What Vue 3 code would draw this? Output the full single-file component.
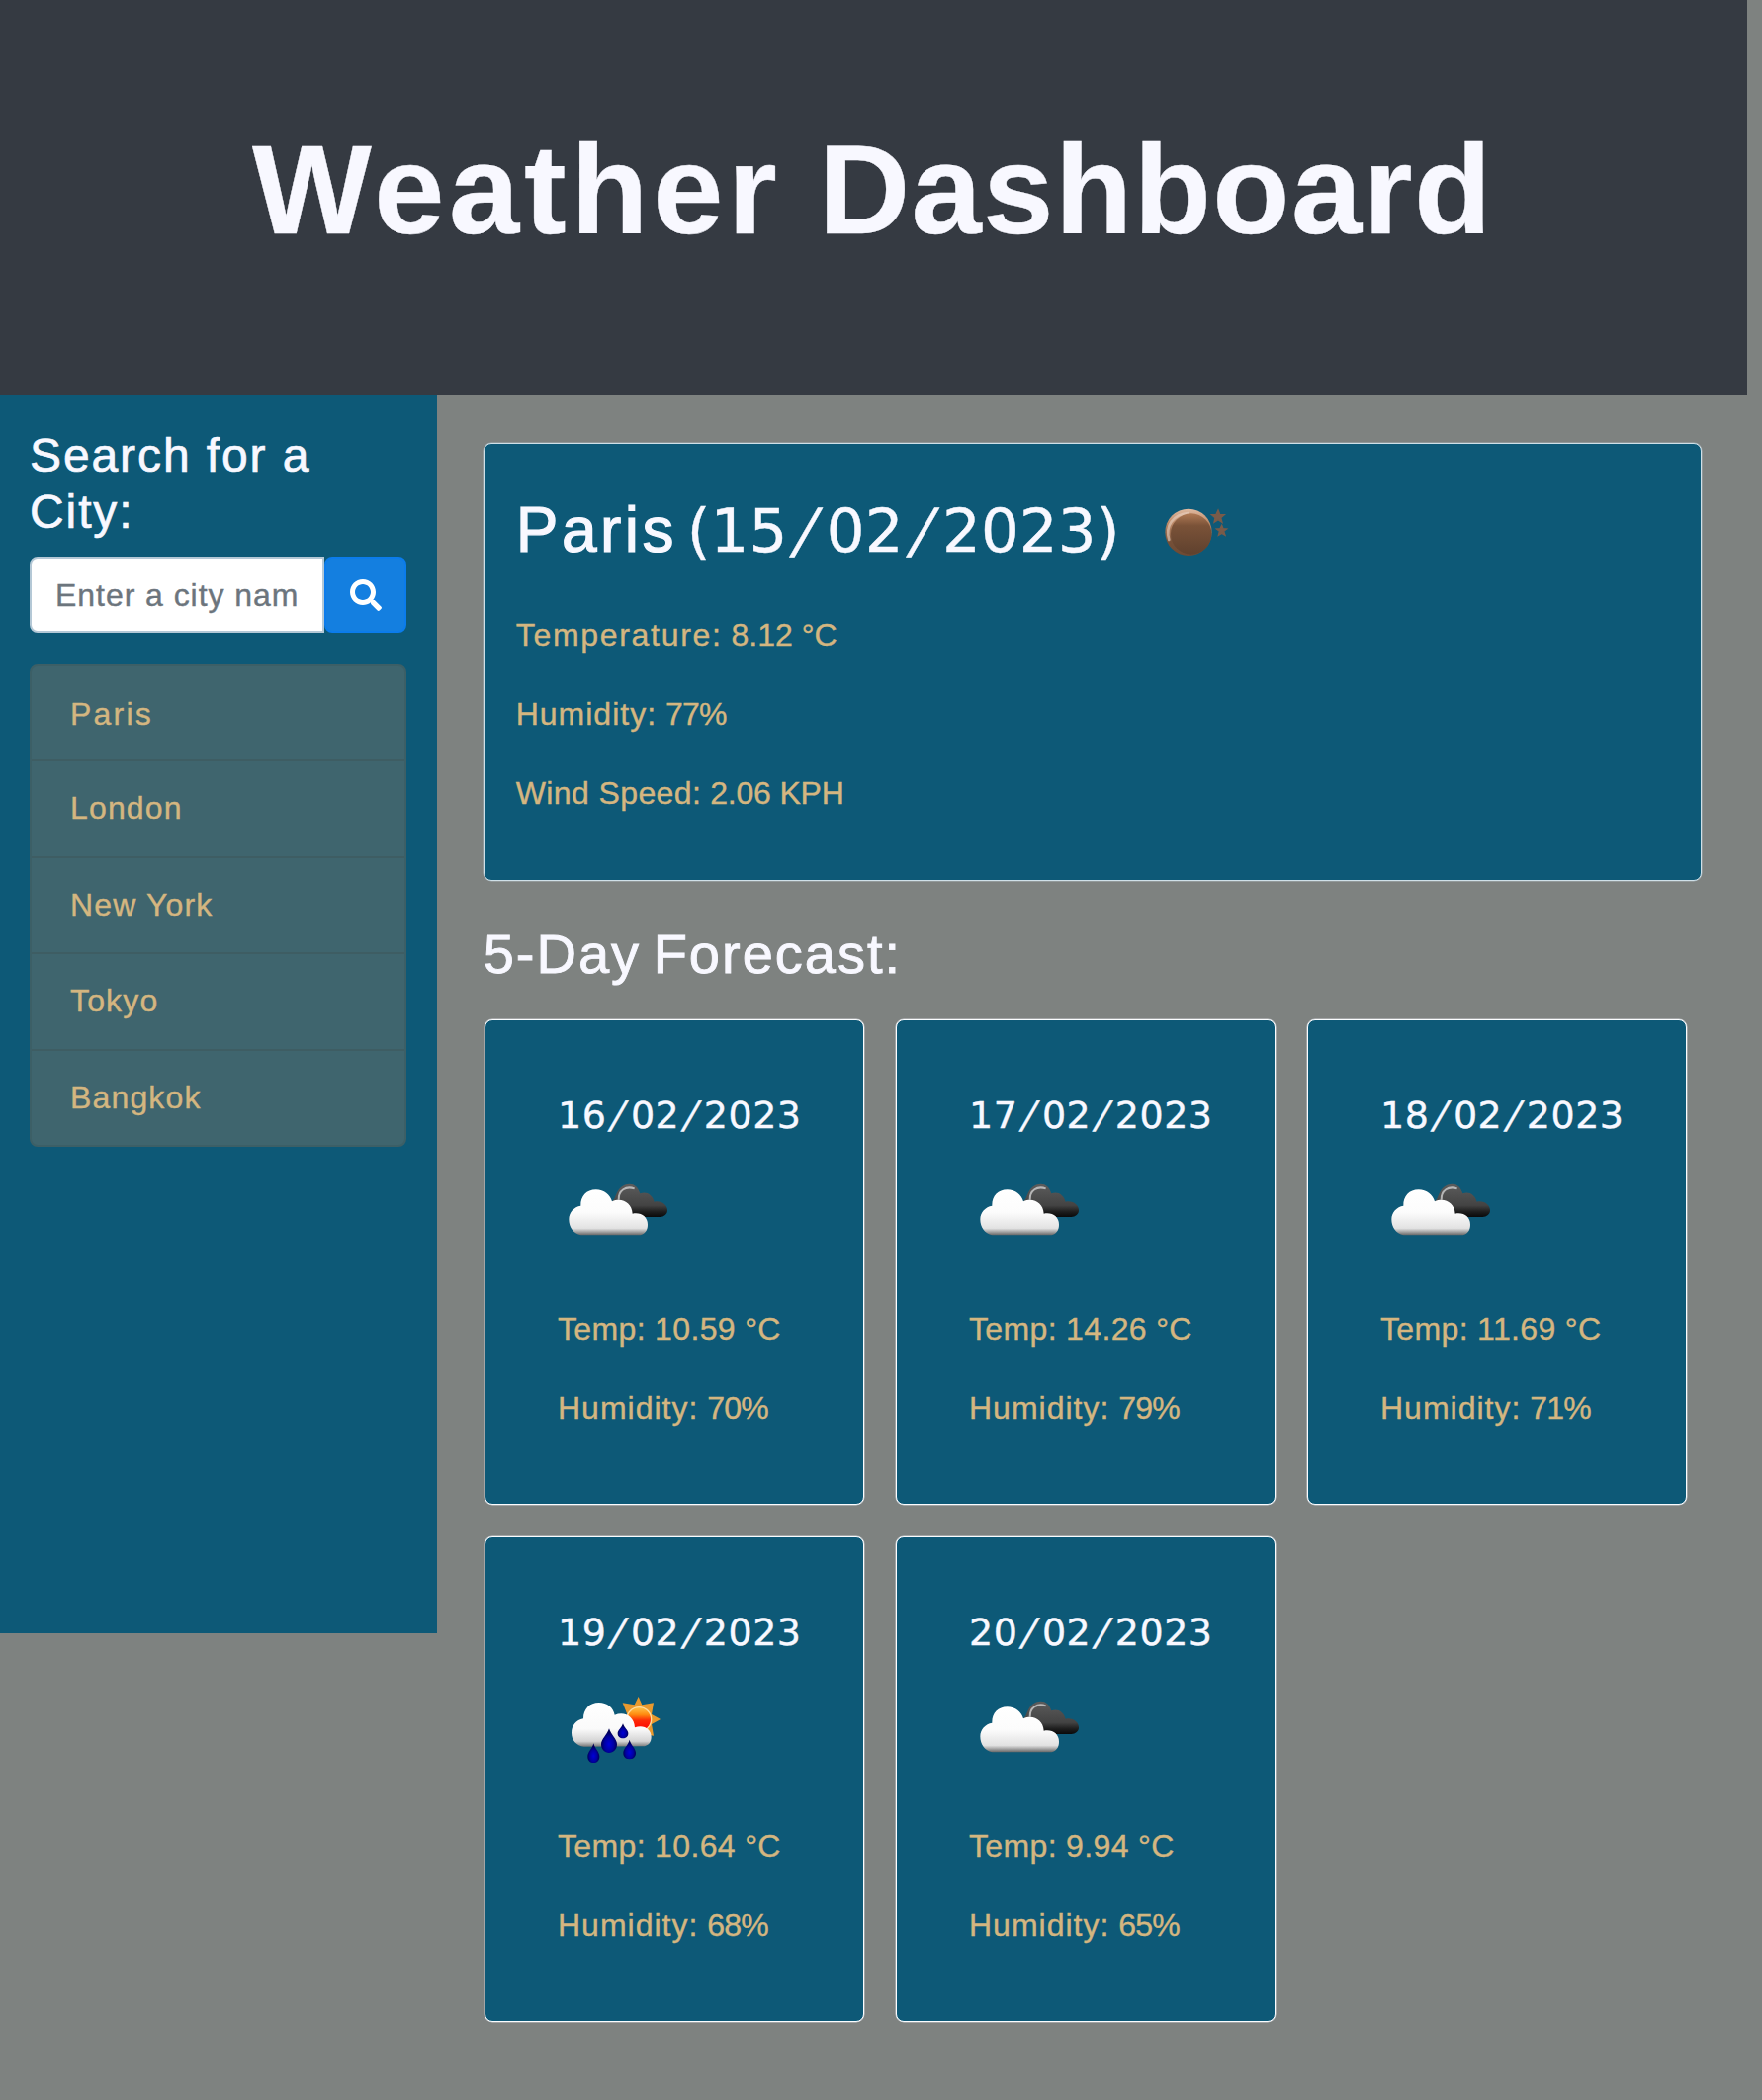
<script setup>
const cities = ['Paris', 'London', 'New York', 'Tokyo', 'Bangkok']
const today = ['15', '02', '2023']
const forecast = [
  { date: ['16', '02', '2023'], icon: 'clouds', temp: '10.59', humidity: 70 },
  { date: ['17', '02', '2023'], icon: 'clouds', temp: '14.26', humidity: 79 },
  { date: ['18', '02', '2023'], icon: 'clouds', temp: '11.69', humidity: 71 },
  { date: ['19', '02', '2023'], icon: 'rain', temp: '10.64', humidity: 68 },
  { date: ['20', '02', '2023'], icon: 'clouds', temp: '9.94', humidity: 65 }
]
</script>

<template>
  <div class="page">
    <header class="hero"><h1><span class="first">Weather</span> <span>Dashboard</span></h1></header>
    <div class="columns">
      <aside class="sidebar">
        <h3>Search for a City:</h3>
        <form class="search" @submit.prevent>
          <div class="field">Enter a city nam</div>
          <button type="submit" aria-label="Search">
            <svg viewBox="0 0 512 512" width="32" height="32">
              <path fill="#fff" d="M505 442.700L405.300 343c-4.500-4.500-10.600-7-17-7H372c27.600-35.300 44-79.700 44-128C416 93.100 322.900 0 208 0S0 93.100 0 208s93.100 208 208 208c48.300 0 92.700-16.400 128-44v16.300c0 6.400 2.500 12.500 7 17l99.700 99.700c9.400 9.400 24.600 9.400 33.900 0l28.300-28.300c9.400-9.400 9.400-24.600.1-34zM208 336c-70.700 0-128-57.200-128-128 0-70.700 57.200-128 128-128 70.700 0 128 57.200 128 128 0 70.700-57.200 128-128 128z" />
            </svg>
          </button>
        </form>
        <ul class="history">
          <li v-for="city in cities" :key="city">{{ city }}</li>
        </ul>
      </aside>

      <main class="content">
        <section class="current">
          <h2>
            <span class="city">Paris</span>
            <span class="day date">({{ today[0] }}<i>/</i>{{ today[1] }}<i>/</i>{{ today[2] }})</span>
            <svg class="moon" viewBox="90 30 300 270" width="100" height="90">
              <defs>
                <linearGradient id="moonBase" x1="0" y1="0" x2="0" y2="1">
                  <stop offset="0" stop-color="#e0bba2" />
                  <stop offset=".3" stop-color="#bd8a68" />
                  <stop offset=".7" stop-color="#755038" />
                  <stop offset="1" stop-color="#6d4a34" />
                </linearGradient>
                <linearGradient id="moonFace" x1="0" y1="0" x2="0" y2="1">
                  <stop offset="0" stop-color="#b07a55" />
                  <stop offset=".3" stop-color="#7a5238" />
                  <stop offset="1" stop-color="#5f412e" />
                </linearGradient>
              </defs>
              <circle cx="219" cy="169" r="71" fill="url(#moonBase)" />
              <path d="M160 192C147 148 174 115 217 111" fill="none" stroke="#e9d2c3" stroke-width="8" stroke-linecap="round" opacity=".6" />
              <circle cx="227" cy="174" r="62" fill="url(#moonFace)" />
              <path d="M309 102l5 13 14 1-11 9 4 14-12-8-12 8 3-14-11-9 14-1zM320 148l4 10 11 1-9 7 4 12-10-6-10 6 3-12-9-7 11-1z" fill="#795b49" stroke="#795b49" stroke-width="4" />
            </svg>
          </h2>
          <p><span class="l-temp">Temperature:</span> <span class="v-temp">8.12 °C</span></p>
          <p><span class="l-hum">Humidity:</span> <span class="v-hum">77%</span></p>
          <p><span class="l-wind">Wind Speed:</span> <span class="v-wind">2.06 KPH</span></p>
        </section>

        <h3 class="title">5-Day Forecast:</h3>
        <section class="forecast">
          <article v-for="day in forecast" :key="day.date[0]" class="card">
            <h5 class="date">{{ day.date[0] }}<i>/</i>{{ day.date[1] }}<i>/</i>{{ day.date[2] }}</h5>
            <svg v-if="day.icon === 'clouds'" class="icon" viewBox="12 -18 360 300" width="120" height="100">
              <defs>
                <linearGradient id="dark" x1="0" y1="0" x2="0" y2="1">
                  <stop offset="0" stop-color="#5c5c5c" />
                  <stop offset=".65" stop-color="#434343" />
                  <stop offset=".85" stop-color="#1c1c1c" />
                  <stop offset="1" stop-color="#0a0a0a" />
                </linearGradient>
                <linearGradient id="light" x1="0" y1="0" x2="0" y2="1">
                  <stop offset="0" stop-color="#fff" />
                  <stop offset=".5" stop-color="#fcfcfc" />
                  <stop offset=".85" stop-color="#e2e2e2" />
                  <stop offset=".92" stop-color="#aaa" />
                  <stop offset="1" stop-color="#666" />
                </linearGradient>
              </defs>
              <path d="M178 104C190 100 188 55 230 53C246 53 256 63 262 82C280 74 299 84 305 107C326 102 345 116 345 133C345 145 335 153 322 153H230L180 120Z" fill="url(#dark)" />
              <path d="M197 101C196 72 219 58 245 67" fill="none" stroke="#c8c8c8" stroke-width="6" opacity=".85" />
              <path d="M82 208C60 204 46 184 46 160C46 139 62 122 82 119C81 90 100 70 128 70C153 70 171 85 177 106C207 93 237 110 239 143C265 138 285 152 285 176C285 194 276 204 263 208Z" fill="url(#light)" />
            </svg>
            <svg v-else class="icon" viewBox="12 -9 360 300" width="120" height="100">
              <defs>
                <linearGradient id="sun" x1="0" y1="0" x2="0" y2="1">
                  <stop offset="0" stop-color="#ffc247" />
                  <stop offset=".3" stop-color="#ff8b10" />
                  <stop offset=".55" stop-color="#fc2a08" />
                  <stop offset="1" stop-color="#f00" />
                </linearGradient>
                <linearGradient id="rainCloud" x1="0" y1="0" x2="0" y2="1">
                  <stop offset="0" stop-color="#fff" />
                  <stop offset=".6" stop-color="#fafafa" />
                  <stop offset=".88" stop-color="#d4d4d4" />
                  <stop offset="1" stop-color="#777" />
                </linearGradient>
                <radialGradient id="drop" cx=".5" cy=".65" r=".5">
                  <stop offset="0" stop-color="#0000d8" />
                  <stop offset=".6" stop-color="#0000a0" />
                  <stop offset="1" stop-color="#000055" />
                </radialGradient>
              </defs>
              <path d="M257 48l11 25 35-6-6 35 27 15-27 15 6 35-35-6-10 9-47-50 12-18-14-35 36 6z" fill="#e9992e" />
              <circle cx="259" cy="117" r="39" fill="#ffdca0" />
              <circle cx="259" cy="117" r="35" fill="url(#sun)" />
              <path d="M92 200C69 197 54 180 54 158C54 136 68 119 90 115C90 86 109 66 137 66C162 66 181 81 185 104C215 92 244 108 246 142C273 132 296 147 296 170C296 188 286 198 270 199Z" fill="url(#rainCloud)" />
              <g fill="url(#drop)">
                <path d="M168 145C174 164 192 177 192 193C192 209 181 219 168 219S144 209 144 193C144 177 162 164 168 145Z" />
                <path d="M210 130C214 143 226 150 226 160C226 170 219 175 210 175S194 170 194 160C194 150 206 143 210 130Z" />
                <path d="M121 190C125 206 139 217 139 230C139 242 131 249 121 249S103 242 103 230C103 217 117 206 121 190Z" />
                <path d="M230 179C234 195 249 206 249 219C249 231 241 238 230 238S211 231 211 219C211 206 226 195 230 179Z" />
              </g>
            </svg>
            <p class="c-temp">Temp: {{ day.temp }} °C</p>
            <p><span class="l-hum">Humidity:</span> <span class="v-hum">{{ day.humidity }}%</span></p>
          </article>
        </section>
      </main>
    </div>
  </div>
</template>

<style>
body {
  background: #7f8280;
}
</style>

<style scoped>
* {
  box-sizing: border-box;
}
.page {
  min-height: 2124px;
  background: #7e8280;
  color: #d4b680;
  font-family: "Liberation Sans", Arial, sans-serif;
  font-size: 32px;
  line-height: 48px;
  -webkit-text-stroke: 0.4px currentColor;
}
h1, h2, h3, h5, p, ul {
  margin: 0;
  padding: 0;
  font-weight: 400;
}
.hero {
  width: 1766.6px;
  height: 400px;
  padding: 115px 0 0 255px;
  background: #353a42;
}
.hero h1 {
  color: #f8f8ff;
  font-size: 128px;
  font-weight: 700;
  line-height: 154px;
  letter-spacing: 1.5px;
  white-space: nowrap;
}
.hero .first {
  letter-spacing: 4.7px;
}
.columns {
  display: flex;
  align-items: flex-start;
}
.sidebar {
  flex: none;
  width: 441.7px;
  height: 1252px;
  padding: 32px 30px;
  background: #0d5977;
}
.sidebar h3 {
  width: 330px;
  color: #f8f8ff;
  font-size: 48px;
  line-height: 57px;
  letter-spacing: 1.9px;
  -webkit-text-stroke-width: 0.7px;
}
.search {
  display: flex;
  height: 77px;
  margin: 17px 0 32px;
}
.field {
  width: 298px;
  padding: 13px 0 0 24px;
  border: 2px solid #b4c8d6;
  border-radius: 8px 0 0 8px;
  background: #fff;
  color: #6c757d;
  letter-spacing: 0.95px;
  white-space: nowrap;
}
.search button {
  display: flex;
  align-items: center;
  justify-content: center;
  width: 83px;
  padding: 0;
  border: 2px solid #0b7cec;
  border-radius: 8px;
  background: #147fe0;
}
.history {
  width: 381px;
  border: 2px solid #3c5f66;
  border-radius: 8px;
  background: #3f656e;
  list-style: none;
}
.history li {
  height: 97.6px;
  padding: 23px 39px 0;
  border-top: 2px solid #3e5d63;
  letter-spacing: 1.15px;
}
.history li:first-child {
  height: 94px;
  padding-top: 24px;
  border-top: 0;
  letter-spacing: 2.2px;
}
.content {
  padding: 48px 0 0 47px;
}
.current {
  width: 1232px;
  height: 443px;
  padding: 49px 32px 0;
  border: 1px solid #cfe0e8;
  border-radius: 8px;
  background: #0d5977;
  box-shadow: 0 0 0 0.5px rgba(207, 224, 232, 0.5);
}
.current h2 {
  display: flex;
  align-items: center;
  height: 77px;
  margin-bottom: 43px;
  color: #f8f8ff;
  font-size: 64px;
  line-height: 77px;
}
.city {
  width: 173px;
  letter-spacing: 3.5px;
  -webkit-text-stroke-width: 1.2px;
}
.date {
  font-family: "DejaVu Sans", sans-serif;
  white-space: nowrap;
}
.date i {
  display: inline-block;
  width: 0.646em;
  font-style: normal;
  letter-spacing: 0;
  text-align: center;
  transform: skewX(-15deg);
}
.day {
  width: 464px;
  font-size: 61px;
  letter-spacing: 0.1px;
}
.moon, .icon {
  display: block;
  filter: blur(0.7px);
}
.current p {
  margin-bottom: 32px;
}
.l-temp {
  letter-spacing: 1.7px;
}
.v-temp {
  letter-spacing: 0;
}
.l-hum {
  letter-spacing: 1px;
}
.v-hum {
  letter-spacing: -0.8px;
}
.l-wind {
  letter-spacing: 0.4px;
}
.v-wind {
  letter-spacing: -0.2px;
}
.title {
  margin: 40px 0 33px;
  color: #f8f8ff;
  font-size: 56px;
  line-height: 67px;
  letter-spacing: 2px;
  word-spacing: -5px;
  -webkit-text-stroke-width: 0.9px;
}
.forecast {
  display: grid;
  grid-template-columns: repeat(3, 384px);
  gap: 32px;
  padding-left: 1.300px;
}
.card {
  height: 491px;
  padding: 72px 0 0 73px;
  border: 1px solid #fbfdff;
  border-radius: 8px;
  background: #0d5977;
  box-shadow: 0 0 0 0.5px rgba(248, 248, 255, 0.6);
}
.card h5 {
  margin-bottom: 22px;
  color: #f8f8ff;
  font-size: 38px;
  letter-spacing: 0.5px;
}
.icon {
  margin-bottom: 46px;
}
.c-temp {
  margin-bottom: 32px;
  letter-spacing: 0.35px;
}
</style>
